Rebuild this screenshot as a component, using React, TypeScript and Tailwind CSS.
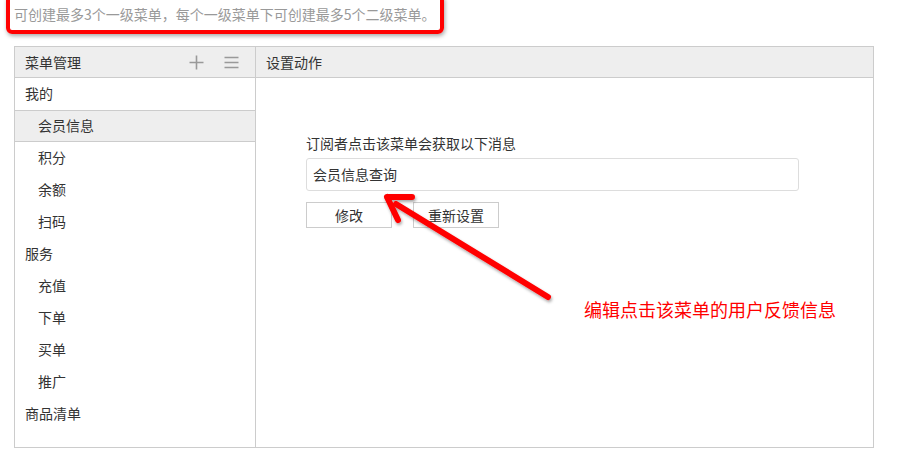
import React from 'react';

const menus = [
  { name: '我的', children: ['会员信息', '积分', '余额', '扫码'] },
  { name: '服务', children: ['充值', '下单', '买单', '推广'] },
  { name: '商品清单', children: [] as string[] },
];

const App: React.FC = () => {
  const active = '会员信息';

  return (
    <div
      className="relative w-[906px] h-[463px] bg-white overflow-hidden text-[#333]"
      style={{ fontFamily: '"Noto Sans CJK SC", "Liberation Sans", sans-serif' }}
    >
      {/* notice with red annotation box */}
      <div className="relative h-[46px]">
        <p className="pl-[14px] pt-[4px] text-[14px] leading-[20px] text-[#999]">
          可创建最多3个一级菜单，每个一级菜单下可创建最多5个二级菜单。
        </p>
        <div className="absolute left-[6px] top-[-6px] w-[438px] h-[40px] border-[4px] border-[#ff0000] rounded-[6px] shadow-[1px_2px_4px_rgba(0,0,0,0.35)]" />
      </div>

      <div className="ml-[14px] w-[860px] h-[402px] border border-[#ccc] flex text-[14px]">
        {/* menu list */}
        <div className="w-[241px] border-r border-[#ccc] flex flex-col leading-[20px]">
          <div className="h-[31px] bg-[#eee] border-b border-[#ccc] flex items-center pl-[10px] pr-[16px]">
            <span className="flex-1">菜单管理</span>
            <svg width="15" height="15" viewBox="0 0 15 15" className="mr-[20px]">
              <path d="M7.5 0.5v14M0.5 7.5h14" stroke="#999" strokeWidth="1.6" />
            </svg>
            <svg width="15" height="13" viewBox="0 0 15 13">
              <path d="M0.5 1.5h14M0.5 6.5h14M0.5 11.5h14" stroke="#999" strokeWidth="1.4" />
            </svg>
          </div>
          {menus.map((m) => (
            <div key={m.name}>
              <div className="h-[32px] flex items-center pl-[10px] pb-[2px]">{m.name}</div>
              {m.children.map((c) => (
                <div
                  key={c}
                  className={`h-[32px] flex items-center pl-[23px] pb-[2px] ${
                    c === active ? 'bg-[#eee] border-y border-[#ccc]' : ''
                  }`}
                >
                  {c}
                </div>
              ))}
            </div>
          ))}
        </div>

        {/* action settings */}
        <div className="flex-1 flex flex-col">
          <div className="h-[31px] bg-[#eee] border-b border-[#ccc] flex items-center pl-[10px]">设置动作</div>
          <div className="pl-[50px] pt-[55px]">
            <div className="leading-[20px]">订阅者点击该菜单会获取以下消息</div>
            <div className="mt-[5px] w-[493px] h-[33px] border border-[#ddd] rounded-[3px] flex items-center pl-[6px]">
              会员信息查询
            </div>
            <div className="mt-[11px] flex gap-[21px]">
              <button className="w-[86px] h-[26px] border border-[#ccc] bg-white text-[14px] text-[#333]">修改</button>
              <button className="w-[86px] h-[26px] border border-[#ccc] bg-white text-[14px] text-[#333]">重新设置</button>
            </div>
          </div>
        </div>
      </div>

      {/* red arrow annotation */}
      <svg className="absolute left-0 top-0 pointer-events-none" width="906" height="463">
        <defs>
          <filter id="sh" x="-20%" y="-20%" width="140%" height="140%">
            <feDropShadow dx="1" dy="2" stdDeviation="1.5" floodColor="#000" floodOpacity="0.35" />
          </filter>
        </defs>
        <g filter="url(#sh)">
          <path d="M548 297 L396 204" stroke="#ff0000" strokeWidth="6" strokeLinecap="round" />
          <path d="M387 197 L412 197 M387 197 L398 220" stroke="#ff0000" strokeWidth="6" strokeLinecap="round" strokeLinejoin="round" fill="none" />
        </g>
      </svg>
      <div className="absolute left-[584px] top-[297px] text-[18px] leading-[24px] text-[#ff0000]">
        编辑点击该菜单的用户反馈信息
      </div>
    </div>
  );
};

export default App;
